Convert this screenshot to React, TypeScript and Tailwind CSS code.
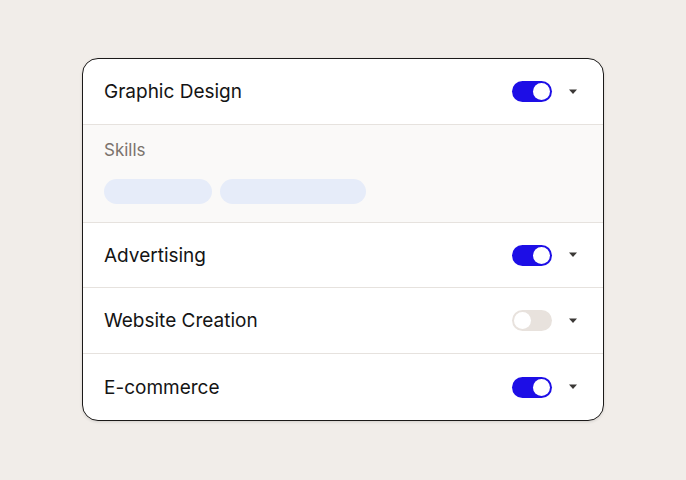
const font = { fontFamily: "Inter, 'Noto Sans', sans-serif" };

function Toggle({ on }: { on: boolean }) {
  return (
    <div
      className={`flex h-[21px] w-[40px] items-center rounded-full p-[2px] ${
        on ? "justify-end bg-[#1d0ee6]" : "justify-start bg-[#e8e2dd]"
      }`}
    >
      <div className="h-[17px] w-[17px] rounded-full bg-white" />
    </div>
  );
}

function Caret() {
  return (
    <svg width="10" height="6" viewBox="0 0 10 6" className="ml-[16px] mr-[1px]">
      <path d="M1 0.5h8L5 5z" fill="#3b3836" />
    </svg>
  );
}

function Row({
  label,
  on,
  border = true,
  h = "h-[65px]",
}: {
  label: string;
  on: boolean;
  border?: boolean;
  h?: string;
}) {
  return (
    <div
      className={`flex ${h} items-center justify-between pl-[21px] pr-[24px] ${
        border ? "border-t border-[#e6e2de]" : ""
      }`}
    >
      <span className="pt-[2px] text-[19px] text-[#141414]">{label}</span>
      <div className="flex items-center">
        <Toggle on={on} />
        <Caret />
      </div>
    </div>
  );
}

export default function App() {
  return (
    <div className="flex h-[480px] w-[686px] items-start justify-center bg-[#f1ede9] pt-[58px]" style={font}>
      <div className="w-[522px] overflow-hidden rounded-[16px] border border-[#1c1a19] bg-white shadow-[0_1px_3px_rgba(0,0,0,0.12)]">
        <Row label="Graphic Design" on border={false} />
        <div className="h-[98px] border-t border-[#e6e2de] bg-[#faf9f8] px-[21px] pt-[13px]">
          <div className="text-[17px] text-[#7b736d]">Skills</div>
          <div className="mt-[15px] flex gap-[8px]">
            <div className="h-[25px] w-[108px] rounded-full bg-[#e6ecf9]" />
            <div className="h-[25px] w-[146px] rounded-full bg-[#e6ecf9]" />
          </div>
        </div>
        <Row label="Advertising" on />
        <Row label="Website Creation" on={false} h="h-[66px]" />
        <Row label="E-commerce" on h="h-[67px]" />
      </div>
    </div>
  );
}
